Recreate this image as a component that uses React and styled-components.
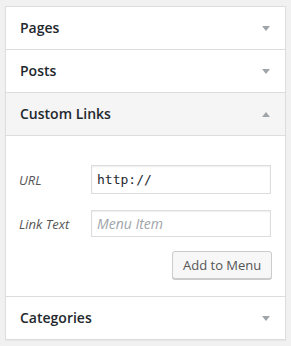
import React from "react";
import styled, { createGlobalStyle } from "styled-components";

const GlobalStyle = createGlobalStyle`
  html, body {
    margin: 0;
    padding: 0;
    background: #f1f1f1;
    font-family: "Open Sans", "Liberation Sans", sans-serif;
  }
`;

const Page = styled.div`
  padding: 6px 6px 6px 5px;
`;

const Panel = styled.div`
  width: 279px;
  border: 1px solid #dddddd;
  background: #fff;
  box-shadow: 0 1px 1px rgba(0, 0, 0, 0.04);
`;

const Section = styled.div`
  border-bottom: 1px solid #dddddd;
  &:last-child {
    border-bottom: none;
  }
`;

const Header = styled.div`
  display: flex;
  align-items: center;
  justify-content: space-between;
  box-sizing: border-box;
  padding: 10px 15px 11px 14px;
  background: ${(p) => (p.open ? "#f5f5f5" : "#fff")};
  border-bottom: ${(p) => (p.open ? "1px solid #dddddd" : "none")};
  height: ${(p) => (p.open ? "43px" : "42px")};
`;

const Title = styled.h3`
  margin: 0;
  font-size: 14px;
  line-height: 21px;
  font-weight: 600;
  color: #23282d;
`;

const Arrow = styled.span`
  width: 0;
  height: 0;
  border-left: 4px solid transparent;
  border-right: 4px solid transparent;
  ${(p) =>
    p.up
      ? "border-bottom: 5px solid #a0a5aa;"
      : "border-top: 5px solid #a0a5aa;"}
  margin-top: 1px;
`;

const Content = styled.div`
  padding: 29px 13px 17px 13px;
  display: flex;
  flex-direction: column;
`;

const Row = styled.div`
  display: flex;
  align-items: center;
  margin-bottom: ${(p) => p.gap || 0}px;
`;

const Label = styled.label`
  width: 72px;
  font-size: 13px;
  font-style: italic;
  color: #555;
`;

const Input = styled.input`
  width: 180px;
  height: ${(p) => p.h}px;
  box-sizing: border-box;
  margin: 0;
  padding: 3px 5px;
  border: 1px solid #dddddd;
  box-shadow: inset 0 1px 2px rgba(0, 0, 0, 0.07);
  background: #fff;
  color: #23282d;
  outline: none;
  font-family: ${(p) =>
    p.mono ? '"DejaVu Sans Mono", monospace' : '"Open Sans", sans-serif'};
  font-size: ${(p) => (p.mono ? "13px" : "14px")};
  &::placeholder {
    color: #a0a5aa;
    font-style: italic;
    opacity: 1;
  }
`;

const Actions = styled.div`
  display: flex;
  justify-content: flex-end;
`;

const Button = styled.button`
  width: 100px;
  height: 28px;
  box-sizing: border-box;
  margin: 0;
  padding: 0 10px 1px;
  border: 1px solid #cccccc;
  border-radius: 3px;
  background: #f7f7f7;
  box-shadow: 0 1px 0 #cccccc;
  color: #555;
  font-family: "Open Sans", sans-serif;
  font-size: 13px;
  line-height: 26px;
  white-space: nowrap;
`;

function Closed({ title }) {
  return (
    <Section>
      <Header>
        <Title>{title}</Title>
        <Arrow />
      </Header>
    </Section>
  );
}

export default function App() {
  return (
    <>
      <GlobalStyle />
      <Page>
        <Panel>
          <Closed title="Pages" />
          <Closed title="Posts" />
          <Section>
            <Header open>
              <Title>Custom Links</Title>
              <Arrow up />
            </Header>
            <Content>
              <Row gap={16}>
                <Label>URL</Label>
                <Input h={29} mono defaultValue="http://" />
              </Row>
              <Row gap={14}>
                <Label>Link Text</Label>
                <Input h={27} placeholder="Menu Item" />
              </Row>
              <Actions>
                <Button>Add to Menu</Button>
              </Actions>
            </Content>
          </Section>
          <Closed title="Categories" />
        </Panel>
      </Page>
    </>
  );
}
